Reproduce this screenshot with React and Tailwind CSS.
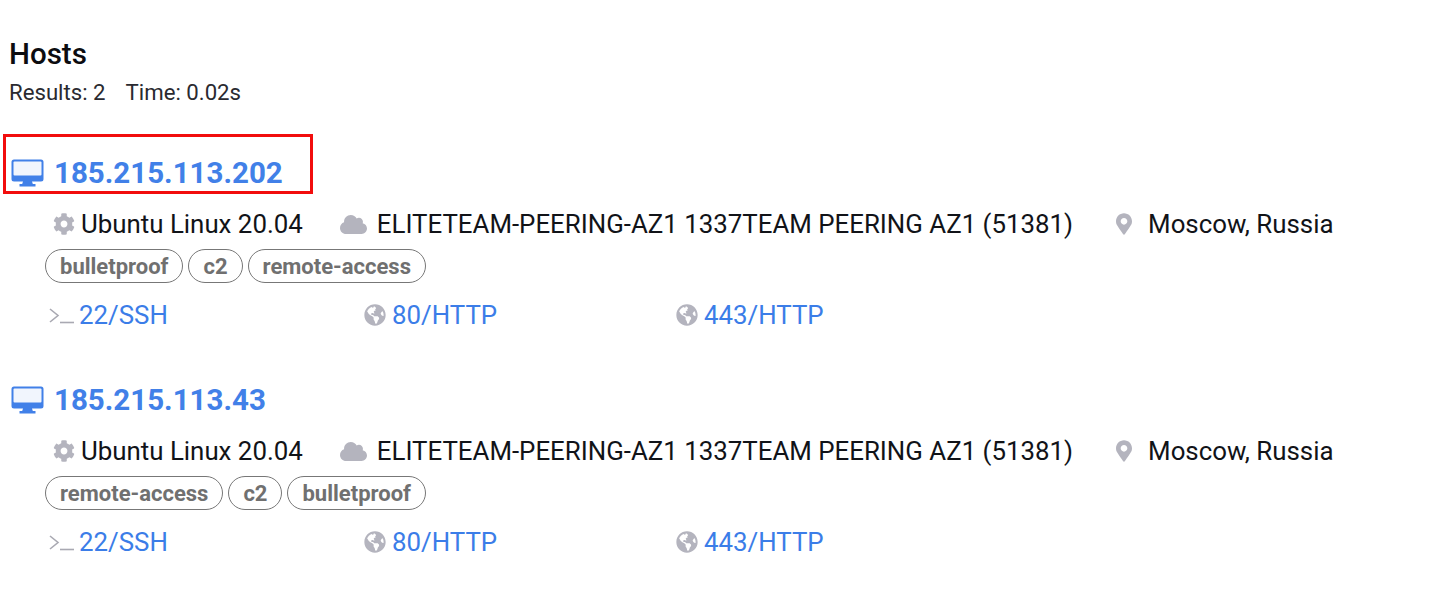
import React from 'react';
import { FaCog, FaCloud, FaMapMarkerAlt, FaGlobeAmericas } from 'react-icons/fa';

const DesktopIcon = () => (
  <svg width="33" height="28" viewBox="0 0 33 28" className="shrink-0">
    <path
      d="M3 .5h27a2.500 2.500 0 0 1 2.500 2.500v17a2.500 2.500 0 0 1-2.500 2.500H21l.8 2.500h2.700v2.500H8.500V25h2.700l.8-2.500H3A2.500 2.500 0 0 1 .500 20V3A2.500 2.500 0 0 1 3 .5z"
      fill="#4180e8"
    />
    <rect x="2.500" y="2.500" width="28" height="14" rx="1" fill="#f1f5fd" />
  </svg>
);

const TerminalIcon = () => (
  <svg width="25" height="18" viewBox="0 0 25 18" fill="none" stroke="#a9a9b2" strokeWidth="1.600" className="shrink-0">
    <path d="M1 3l8 6.500L1 16" />
    <path d="M11 16.500h14" />
  </svg>
);

const Globe = () => <FaGlobeAmericas className="h-[22px] w-[22px] shrink-0 text-[#b4b4be]" />;

const Port = ({ icon, label, className }) => (
  <div className={`flex items-center ${className}`}>
    {icon}
    <a className="text-[#3b7de8]">{label}</a>
  </div>
);

const Host = ({ ip, tags }) => (
  <div className="mb-[42px]">
    <div className="flex h-[46px] items-center gap-[10px] pl-[11px] text-[29.500px] font-bold text-[#4180e8]">
      <DesktopIcon />
      <a>{ip}</a>
    </div>
    <div className="ml-[53px] mt-[8px] flex h-[40px] items-center text-[25.850px] text-[#111318]">
      <FaCog className="mr-[6px] h-[22px] w-[22px] text-[#b4b4be]" />
      <span>Ubuntu Linux 20.04</span>
      <FaCloud className="ml-[37px] mr-[10px] h-[27px] w-[27px] text-[#b4b4be]" />
      <span>ELITETEAM-PEERING-AZ1 1337TEAM PEERING AZ1 (51381)</span>
      <FaMapMarkerAlt className="ml-[43px] mr-[16px] h-[22px] w-[16px] text-[#b4b4be]" />
      <span>Moscow, Russia</span>
    </div>
    <div className="ml-[45px] mt-[5px] flex gap-[5px]">
      {tags.map((tag) => (
        <span
          key={tag}
          className="flex h-[34px] items-center rounded-full border border-[#777] px-[14px] text-[22px] font-bold text-[#707070]"
        >
          {tag}
        </span>
      ))}
    </div>
    <div className="ml-[49px] mt-[12px] flex h-[40px] items-center text-[25.850px]">
      <Port className="w-[315px] gap-[5px]" icon={<TerminalIcon />} label="22/SSH" />
      <Port className="w-[312px] gap-[6px]" icon={<Globe />} label="80/HTTP" />
      <Port className="gap-[6px]" icon={<Globe />} label="443/HTTP" />
    </div>
  </div>
);

export default function App() {
  return (
    <div className="relative h-[615px] overflow-hidden bg-white pl-[9px] pt-[34px] font-['Roboto',sans-serif]">
      <h1 className="text-[29.500px] font-medium leading-[40px] text-[#0c0c10]">Hosts</h1>
      <div className="mt-[1px] flex gap-[20px] text-[22.200px] leading-[34px] text-[#2a2a30]">
        <span>Results: 2</span>
        <span>Time: 0.02s</span>
      </div>
      <div className="-ml-[9px] mt-[41px]">
        <Host ip="185.215.113.202" tags={['bulletproof', 'c2', 'remote-access']} />
        <Host ip="185.215.113.43" tags={['remote-access', 'c2', 'bulletproof']} />
      </div>
      {/* red annotation box */}
      <div className="absolute left-[3px] top-[134px] h-[60px] w-[310px] border-[3px] border-[#f20d0d]" />
    </div>
  );
}
